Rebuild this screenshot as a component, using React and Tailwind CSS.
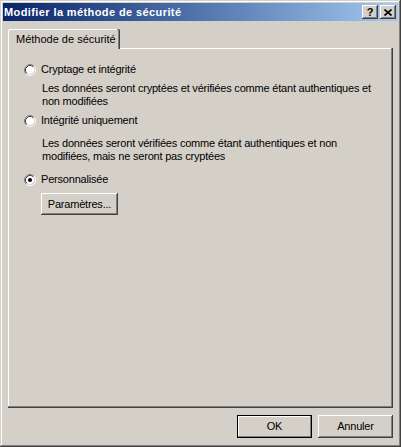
import React from "react";

const font = { fontFamily: '"Liberation Sans", Arial, sans-serif' };

const Radio = ({ checked }) => (
  <svg width="12" height="12" viewBox="0 0 12 12" className="shrink-0">
    <circle cx="6" cy="6" r="4.5" fill="#ffffff" />
    <path d="M2.11 9.89 A5.5 5.5 0 0 1 9.89 2.11" fill="none" stroke="#808080" />
    <path d="M9.89 2.11 A5.5 5.5 0 0 1 2.11 9.89" fill="none" stroke="#ffffff" />
    <path d="M2.82 9.18 A4.5 4.5 0 0 1 9.18 2.82" fill="none" stroke="#404040" />
    <path d="M9.18 2.82 A4.5 4.5 0 0 1 2.82 9.18" fill="none" stroke="#d4d0c8" />
    {checked && <circle cx="6" cy="6" r="2" fill="#000000" />}
  </svg>
);

const Option = ({ label, checked, lines, mt, descMt }) => (
  <div className={mt}>
    <div className="flex items-center h-[13px] pl-[16px]">
      <Radio checked={checked} />
      <span className="ml-[5px] leading-[13px]">{label}</span>
    </div>
    {lines && (
      <div className={`${descMt} pl-[34px] leading-[13px]`}>
        {lines.map((l) => (
          <div key={l} className="whitespace-nowrap">{l}</div>
        ))}
      </div>
    )}
  </div>
);

const bevel =
  "shadow-[inset_-1px_-1px_0_#404040,inset_1px_1px_0_#ffffff,inset_-2px_-2px_0_#808080]";

const CapButton = ({ children }) => (
  <div
    className={`w-[16px] h-[14px] bg-[#d4d0c8] flex items-center justify-center ${bevel}`}
  >
    {children}
  </div>
);

export default function App() {
  return (
    <div
      style={font}
      className="w-[401px] h-[447px] bg-[#d4d0c8] p-[3px] text-[11px] tracking-[-0.2px] text-black shadow-[inset_-1px_-1px_0_#404040,inset_1px_1px_0_#d4d0c8,inset_-2px_-2px_0_#808080,inset_2px_2px_0_#ffffff] flex flex-col"
    >
      {/* title bar */}
      <div className="h-[18px] bg-gradient-to-r from-[#0a246a] to-[#a6caf0] flex items-center pl-[1px] pr-[2px]">
        <span className="font-bold text-white leading-[18px] tracking-[0.4px] flex-1">
          Modifier la méthode de sécurité
        </span>
        <div className="flex gap-[2px]">
          <CapButton>
            <span className="font-bold text-[11px] leading-none mt-[1px] tracking-normal">?</span>
          </CapButton>
          <CapButton>
            <svg width="8" height="7" viewBox="0 0 8 7">
              <path d="M0.5 0.5 L7.5 6.5 M7.5 0.5 L0.5 6.5" stroke="#000" strokeWidth="1.6" />
            </svg>
          </CapButton>
        </div>
      </div>

      <div className="pl-[5px] pr-[5px] mt-[8px] flex flex-col">
        {/* tab */}
        <div className="relative z-10 w-[112px] h-[20px] -mb-[1px] bg-[#d4d0c8] rounded-t-[2px] shadow-[inset_-1px_0_0_#404040,inset_-2px_0_0_#808080,inset_1px_1px_0_#ffffff] pl-[8px] pt-[4px] leading-[13px] tracking-normal">
          Méthode de sécurité
        </div>

        {/* panel */}
        <div className="h-[360px] pt-[15px] shadow-[inset_-1px_-1px_0_#404040,inset_-2px_-2px_0_#808080,inset_1px_1px_0_#ffffff]">
          <Option
            label="Cryptage et intégrité"
            lines={[
              "Les données seront cryptées et vérifiées comme étant authentiques et",
              "non modifiées",
            ]}
            descMt="mt-[6px]"
          />
          <Option
            mt="mt-[6px]"
            label="Intégrité uniquement"
            lines={[
              "Les données seront vérifiées comme étant authentiques et non",
              "modifiées, mais ne seront pas cryptées",
            ]}
            descMt="mt-[10px]"
          />
          <Option mt="mt-[10px]" label="Personnalisée" checked />
          <div className="mt-[7px] ml-[33px] w-[77px] h-[22px] flex items-center justify-center shadow-[inset_-1px_-1px_0_#404040,inset_1px_1px_0_#ffffff,inset_-2px_-2px_0_#808080]">
            Paramètres...
          </div>
        </div>

        {/* buttons */}
        <div className="mt-[7px] flex justify-end gap-[6px]">
          <div className="w-[75px] h-[23px] border border-black flex items-center justify-center shadow-[inset_-1px_-1px_0_#808080,inset_1px_1px_0_#ffffff]">
            OK
          </div>
          <div className={`w-[75px] h-[23px] flex items-center justify-center ${bevel}`}>
            Annuler
          </div>
        </div>
      </div>
    </div>
  );
}
